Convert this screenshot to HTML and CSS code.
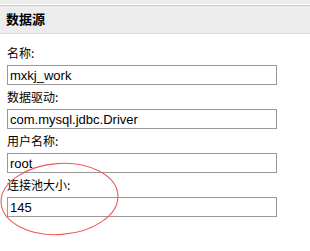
FILE: index.html
```html
<!DOCTYPE html>
<html>
<head>
<meta charset="utf-8">
<link rel="stylesheet" href="styles.css">
</head>
<body>
<div class="page">
  <div class="topband"></div>
  <div class="header">数据源</div>
  <form class="form">
    <div class="field">
      <label class="label">名称:</label>
      <input class="input" type="text" value="mxkj_work">
    </div>
    <div class="field">
      <label class="label">数据驱动:</label>
      <input class="input" type="text" value="com.mysql.jdbc.Driver">
    </div>
    <div class="field">
      <label class="label">用户名称:</label>
      <input class="input" type="text" value="root">
    </div>
    <div class="field">
      <label class="label">连接池大小:</label>
      <input class="input" type="text" value="145">
    </div>
  </form>
  <svg class="mark" width="130" height="80" viewBox="0 0 130 80">
    <ellipse cx="59.5" cy="37" rx="58.5" ry="35.5" fill="none" stroke="#ee5a5a" stroke-width="1.1" transform="rotate(-4 59.5 37)"/>
  </svg>
</div>
</body>
</html>
```
FILE: styles.css
```css
html, body {
  margin: 0;
  padding: 0;
  background: #fff;
}
.page {
  position: relative;
  width: 310px;
  height: 251px;
  overflow: hidden;
  font-family: "Noto Sans CJK SC", "Liberation Sans", sans-serif;
  color: #000;
}
.topband {
  height: 4px;
  background: #ececec;
  border-bottom: 1px solid #ffffff;
}
.header {
  height: 27px;
  border-top: 1px solid #c9c9c9;
  border-bottom: 1px solid #dcdcdc;
  background: #ececec;
  font-size: 13px;
  font-weight: bold;
  line-height: 26px;
  padding-left: 6px;
}
.form {
  margin: 0;
  padding: 10px 0 0 7px;
  display: flex;
  flex-direction: column;
}
.field {
  display: flex;
  flex-direction: column;
  align-items: flex-start;
  margin-bottom: 3px;
}
.label {
  font-size: 12px;
  line-height: 18px;
  height: 18px;
  margin-bottom: 3px;
}
.input {
  box-sizing: border-box;
  width: 270px;
  height: 20px;
  margin: 0;
  padding: 0 2px;
  border: 1px solid #999;
  font-family: "Liberation Sans", Arial, sans-serif;
  font-size: 13px;
  color: #000;
  background: #fff;
  outline: none;
}
.mark {
  position: absolute;
  left: 0;
  top: 162px;
}
```
